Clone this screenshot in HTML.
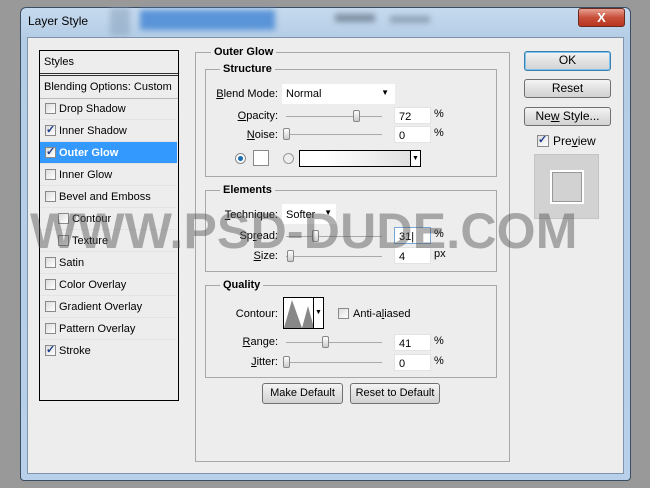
<!DOCTYPE html><html><head><style>
*{margin:0;padding:0;box-sizing:border-box}
body{width:650px;height:488px;background:#999;position:relative;overflow:hidden;font-family:"Liberation Sans",sans-serif;font-size:11px;color:#000}
div{white-space:nowrap}
.a{position:absolute}
.win{left:20px;top:7px;width:611px;height:474px;border-radius:6px 6px 4px 4px;background:linear-gradient(#c6daee,#b4cde6 30px,#b8d0ea);border:1px solid #3c4e63}
.client{left:27px;top:37px;width:597px;height:437px;background:#ededed;border:1px solid #7f93aa}
.cb{position:absolute;width:11px;height:11px;border:1px solid #8a8a8a;background:linear-gradient(135deg,#ddd,#fff)}
.ck::after{content:"✓";position:absolute;left:0;top:-3px;font-size:11px;color:#1c3d8a;font-weight:bold}
.row{position:absolute;left:40px;width:137px;height:22px;border-bottom:1px solid #e4e4e4}
.row span{position:absolute;left:19px;top:5px}
.row .cb{left:5px;top:5px}
.grp{position:absolute;border:1px solid #a8a8a8}
.lg{position:absolute;background:#ededed;font-weight:bold;padding:0 3px}
.inp{position:absolute;background:#fff;height:17px;padding:3px 4px;border:1px solid #e3e3e3}
.lbl{position:absolute;text-align:right}
.track{position:absolute;height:1px;border-top:1px solid #aaa;width:96px}
.th{position:absolute;width:7px;height:12px;border:1px solid #888;border-radius:2px;background:linear-gradient(#fff,#ccc)}
.btn{position:absolute;border:1px solid #707070;border-radius:3px;background:linear-gradient(#f4f4f4,#e2e2e2 50%,#d2d2d2);text-align:center;font-size:12px;line-height:17px}
.pct{position:absolute}
u{text-decoration:underline}
</style></head><body>
<div class="a win"></div>
<div class="a" style="left:110px;top:8px;width:20px;height:28px;background:#8ea7c0;opacity:.6;filter:blur(3px)"></div>
<div class="a" style="left:140px;top:10px;width:135px;height:20px;background:#5a94d8;filter:blur(3px)"></div>
<div class="a" style="left:335px;top:14px;width:40px;height:8px;background:#7f90a3;filter:blur(3px)"></div>
<div class="a" style="left:390px;top:16px;width:40px;height:7px;background:#8fa2b6;filter:blur(3px)"></div>
<div class="a" style="left:28px;top:14px;font-size:12px">Layer Style</div>
<div class="a" style="left:578px;top:8px;width:47px;height:19px;border-radius:3px;border:1px solid #6a2a20;background:linear-gradient(#e8a292,#c8503a 50%,#b8341f);color:#fff;font-weight:bold;text-align:center;font-size:13px;line-height:17px">X</div>
<div class="a client"></div>

<div class="a" style="left:39px;top:50px;width:140px;height:351px;border:1px solid #000;background:#ededed"></div>
<div class="a" style="left:44px;top:56px">Styles</div>
<div class="a" style="left:40px;top:73px;width:138px;height:3px;border-top:1px solid #333;border-bottom:1px solid #333"></div>
<div class="a" style="left:44px;top:81px">Blending Options: Custom</div>
<div class="a" style="left:40px;top:98px;width:138px;border-top:1px solid #bbb"></div>
<div class="row" style="top:98px"><div class="cb"></div><span>Drop Shadow</span></div>
<div class="row" style="top:120px"><div class="cb ck"></div><span>Inner Shadow</span></div>
<div class="row" style="top:142px;background:#3399ff;color:#fff;font-weight:bold"><div class="cb ck"></div><span>Outer Glow</span></div>
<div class="row" style="top:164px"><div class="cb"></div><span>Inner Glow</span></div>
<div class="row" style="top:186px"><div class="cb"></div><span>Bevel and Emboss</span></div>
<div class="row" style="top:208px"><div class="cb" style="left:18px"></div><span style="left:32px">Contour</span></div>
<div class="row" style="top:230px"><div class="cb" style="left:18px"></div><span style="left:32px">Texture</span></div>
<div class="row" style="top:252px"><div class="cb"></div><span>Satin</span></div>
<div class="row" style="top:274px"><div class="cb"></div><span>Color Overlay</span></div>
<div class="row" style="top:296px"><div class="cb"></div><span>Gradient Overlay</span></div>
<div class="row" style="top:318px"><div class="cb"></div><span>Pattern Overlay</span></div>
<div class="row" style="top:340px;border:0"><div class="cb ck"></div><span>Stroke</span></div>

<div class="grp" style="left:195px;top:52px;width:315px;height:410px"></div>
<div class="lg" style="left:211px;top:46px">Outer Glow</div>
<div class="grp" style="left:205px;top:69px;width:292px;height:108px"></div>
<div class="lg" style="left:220px;top:63px">Structure</div>
<div class="lbl" style="left:200px;top:88px;width:78px"><u>B</u>lend Mode:</div>
<div class="inp" style="left:282px;top:84px;width:113px;height:20px;border:0;padding-top:4px">Normal<span style="position:absolute;right:6px;top:4px;font-size:8px">▼</span></div>
<div class="lbl" style="left:200px;top:110px;width:78px"><u>O</u>pacity:</div>
<div class="track" style="left:286px;top:116px"></div><div class="th" style="left:353px;top:110px"></div>
<div class="inp" style="left:394px;top:107px;width:37px">72</div><div class="pct" style="left:434px;top:108px">%</div>
<div class="lbl" style="left:200px;top:129px;width:78px"><u>N</u>oise:</div>
<div class="track" style="left:286px;top:134px"></div><div class="th" style="left:283px;top:128px"></div>
<div class="inp" style="left:394px;top:126px;width:37px">0</div><div class="pct" style="left:434px;top:127px">%</div>
<div class="a" style="left:235px;top:153px;width:11px;height:11px;border-radius:50%;border:1px solid #888;background:radial-gradient(#1e6fb0 35%,#fff 45%)"></div>
<div class="a" style="left:253px;top:150px;width:16px;height:16px;border:1px solid #888;background:#fff"></div>
<div class="a" style="left:283px;top:153px;width:11px;height:11px;border-radius:50%;border:1px solid #999;background:#eee"></div>
<div class="a" style="left:299px;top:150px;width:122px;height:17px;border:1px solid #000;background:linear-gradient(90deg,#fff 20%,#ddd)"><div style="position:absolute;right:0;top:0;width:10px;height:15px;border-left:1px solid #000;background:#fff;font-size:7px;text-align:center;line-height:15px">▼</div></div>

<div class="grp" style="left:205px;top:190px;width:292px;height:82px"></div>
<div class="lg" style="left:220px;top:184px">Elements</div>
<div class="lbl" style="left:200px;top:209px;width:78px"><u>T</u>echnique:</div>
<div class="inp" style="left:282px;top:204px;width:54px;height:20px;border:0;padding-top:5px">Softer<span style="position:absolute;right:4px;top:4px;font-size:8px">▼</span></div>
<div class="lbl" style="left:200px;top:230px;width:78px">Sp<u>r</u>ead:</div>
<div class="track" style="left:286px;top:236px"></div><div class="th" style="left:312px;top:230px"></div>
<div class="inp" style="left:394px;top:227px;width:37px;border-color:#7aa7d6">31|</div><div class="pct" style="left:434px;top:228px">%</div>
<div class="lbl" style="left:200px;top:250px;width:78px"><u>S</u>ize:</div>
<div class="track" style="left:286px;top:256px"></div><div class="th" style="left:287px;top:250px"></div>
<div class="inp" style="left:394px;top:247px;width:37px">4</div><div class="pct" style="left:434px;top:248px">px</div>

<div class="grp" style="left:205px;top:285px;width:292px;height:93px"></div>
<div class="lg" style="left:220px;top:279px">Quality</div>
<div class="lbl" style="left:200px;top:308px;width:78px">Contour:</div>
<div class="a" style="left:283px;top:297px;width:41px;height:32px;border:1px solid #000;background:#fff">
<svg width="30" height="30" style="position:absolute;left:0;top:0"><path d="M0 30 L8 2 L18 30 L24 8 L30 30Z" fill="#888"/></svg>
<div style="position:absolute;right:0;top:0;width:10px;height:30px;border-left:1px solid #000;font-size:7px;text-align:center;line-height:30px">▼</div></div>
<div class="cb" style="left:338px;top:308px"></div><div class="a" style="left:353px;top:308px">Anti-a<u>l</u>iased</div>
<div class="lbl" style="left:200px;top:336px;width:78px"><u>R</u>ange:</div>
<div class="track" style="left:286px;top:342px"></div><div class="th" style="left:322px;top:336px"></div>
<div class="inp" style="left:394px;top:334px;width:37px">41</div><div class="pct" style="left:434px;top:335px">%</div>
<div class="lbl" style="left:200px;top:356px;width:78px"><u>J</u>itter:</div>
<div class="track" style="left:286px;top:362px"></div><div class="th" style="left:283px;top:356px"></div>
<div class="inp" style="left:394px;top:354px;width:37px">0</div><div class="pct" style="left:434px;top:355px">%</div>

<div class="btn" style="left:262px;top:383px;width:81px;height:21px;font-size:11px;line-height:19px">Make Default</div>
<div class="btn" style="left:350px;top:383px;width:90px;height:21px;font-size:11px;line-height:19px">Reset to Default</div>

<div class="btn" style="left:524px;top:51px;width:87px;height:20px;border-color:#3c7fb1;box-shadow:inset 0 0 0 1px #7ec4ea">OK</div>
<div class="btn" style="left:524px;top:79px;width:87px;height:19px">Reset</div>
<div class="btn" style="left:524px;top:107px;width:87px;height:19px">Ne<u>w</u> Style...</div>
<div class="cb ck" style="left:537px;top:135px;width:12px;height:12px"></div>
<div class="a" style="left:553px;top:134px;font-size:12px">Pre<u>v</u>iew</div>
<div class="a" style="left:534px;top:154px;width:65px;height:65px;background:#d2d2d2;border:1px solid #c4c4c4"></div>
<div class="a" style="left:550px;top:170px;width:34px;height:34px;border:2px solid #fff;background:#d2d2d2;box-shadow:inset 0 0 0 1px #999"></div>

<div class="a" style="left:30px;top:202px;font-family:'Liberation Sans',sans-serif;font-weight:bold;font-size:50px;color:rgba(80,80,80,.45);white-space:nowrap;letter-spacing:0.2px">WWW.PSD-DUDE.COM</div>
</body></html>
